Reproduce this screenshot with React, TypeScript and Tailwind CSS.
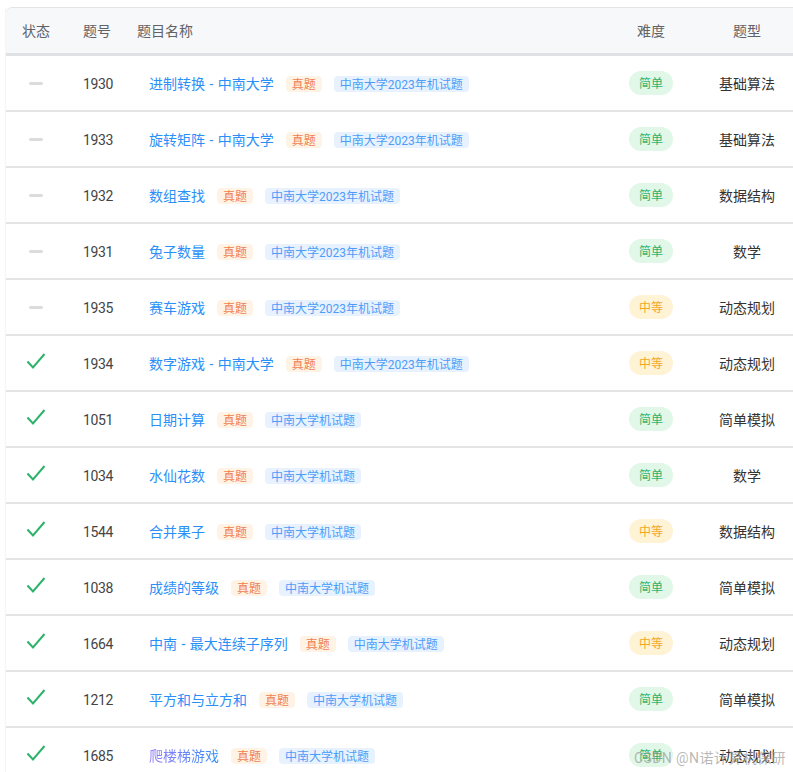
const rows: [boolean, string, string, string, boolean, string][] = [
  [false, "1930", "进制转换 - 中南大学", "中南大学2023年机试题", true, "基础算法"],
  [false, "1933", "旋转矩阵 - 中南大学", "中南大学2023年机试题", true, "基础算法"],
  [false, "1932", "数组查找", "中南大学2023年机试题", true, "数据结构"],
  [false, "1931", "兔子数量", "中南大学2023年机试题", true, "数学"],
  [false, "1935", "赛车游戏", "中南大学2023年机试题", false, "动态规划"],
  [true, "1934", "数字游戏 - 中南大学", "中南大学2023年机试题", false, "动态规划"],
  [true, "1051", "日期计算", "中南大学机试题", true, "简单模拟"],
  [true, "1034", "水仙花数", "中南大学机试题", true, "数学"],
  [true, "1544", "合并果子", "中南大学机试题", false, "数据结构"],
  [true, "1038", "成绩的等级", "中南大学机试题", true, "简单模拟"],
  [true, "1664", "中南 - 最大连续子序列", "中南大学机试题", false, "动态规划"],
  [true, "1212", "平方和与立方和", "中南大学机试题", true, "简单模拟"],
  [true, "1685", "爬楼梯游戏", "中南大学机试题", true, "动态规划"],
];

export default function App() {
  return (
    <div className="relative h-[772px] w-[793px] overflow-hidden bg-white font-['Roboto','Noto_Sans_CJK_SC',sans-serif] text-[14px]">
      <div className="ml-[5px] mt-[7px] border-l border-[#f5f5f5]">
        <div className="flex h-[49px] items-center rounded-tl-md border-t border-b-[3px] border-t-[#e4e5e8] border-b-[#dfe1e5] bg-[#f7f8fa] pt-[2px] text-[#606266]">
          <div className="w-[60px] text-center">状态</div>
          <div className="w-[71px] pl-[17px]">题号</div>
          <div className="flex-1">题目名称</div>
          <div className="w-[44px] text-center">难度</div>
          <div className="flex w-[120px] justify-center pl-[28px]">题型</div>
        </div>
        {rows.map(([done, id, name, source, easy, type]) => (
          <div key={id} className="flex h-[56px] items-center border-b-2 border-[#e4e4e4]">
            <div className="flex w-[60px] justify-center">
              {done ? (
                <svg width="20" height="16" viewBox="0 0 20 16" fill="none" className="-mt-[5px]">
                  <path d="M1.5 8.5 L7 14.5 L18.5 1" stroke="#2fb36b" strokeWidth="2" />
                </svg>
              ) : (
                <div className="h-[3px] w-[14px] rounded-full bg-[#dcdcdc]" />
              )}
            </div>
            <div className="mt-[2px] w-[66px] pl-[17px] tracking-[-0.4px] text-[#444]">{id}</div>
            <div className="flex flex-1 items-center pl-[17px]">
              <span
                className={
                  id === "1685"
                    ? "mt-[2px] whitespace-nowrap bg-gradient-to-r from-[#8f7bf7] to-[#2a8ff7] bg-clip-text text-transparent"
                    : "mt-[2px] whitespace-nowrap text-[#2a8ff7] [word-spacing:1px]"
                }
              >
                {name}
              </span>
              <span className="ml-3 mt-[2px] flex h-4 items-center rounded bg-[#fff3e6] px-[6px] pt-[1px] text-[12px] text-[#f0804f]">真题</span>
              <span className="ml-3 mt-[2px] flex h-4 items-center whitespace-nowrap rounded bg-[#e8f2ff] px-[6px] pt-[1px] text-[12px] text-[#4d9df8]">{source}</span>
            </div>
            <div className="w-[44px] shrink-0">
              <div className={`flex h-6 items-center justify-center rounded-full pt-[1px] text-[12px] ${easy ? "bg-[#e1f7e7] text-[#2fb36b]" : "bg-[#fff3d6] text-[#f5a623]"}`}>
                {easy ? "简单" : "中等"}
              </div>
            </div>
            <div className="mt-[2px] flex w-[120px] shrink-0 justify-center pl-[28px] text-[#333]">{type}</div>
          </div>
        ))}
      </div>
      <div className="absolute left-[634px] top-[748px] whitespace-nowrap text-[14px] tracking-[0.4px] text-[#999]/70">CSDN @N诺计算机保研</div>
    </div>
  );
}
